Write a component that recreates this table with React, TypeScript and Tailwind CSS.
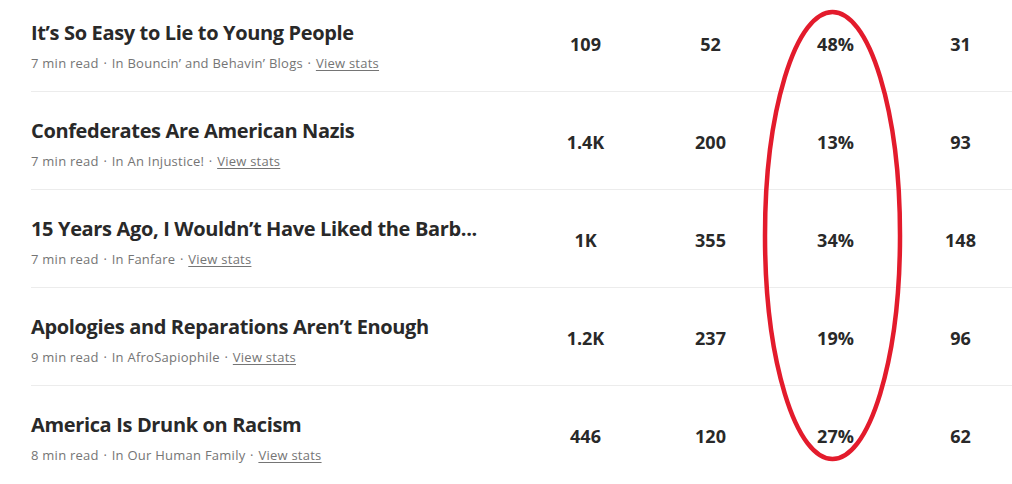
import React from "react";

const rows = [
  { title: "It’s So Easy to Lie to Young People", min: "7", pub: "Bouncin’ and Behavin’ Blogs", v: ["109", "52", "48%", "31"] },
  { title: "Confederates Are American Nazis", min: "7", pub: "An Injustice!", v: ["1.4K", "200", "13%", "93"] },
  { title: "15 Years Ago, I Wouldn’t Have Liked the Barb...", min: "7", pub: "Fanfare", v: ["1K", "355", "34%", "148"] },
  { title: "Apologies and Reparations Aren’t Enough", min: "9", pub: "AfroSapiophile", v: ["1.2K", "237", "19%", "96"] },
  { title: "America Is Drunk on Racism", min: "8", pub: "Our Human Family", v: ["446", "120", "27%", "62"] },
];

export default function App() {
  return (
    <div
      className="relative w-[1012px] h-[484px] overflow-hidden bg-white"
      style={{ fontFamily: '"Open Sans", "Noto Sans", sans-serif' }}
    >
      <div className="ml-[31px] w-[992px] mt-[-6px]">
        {rows.map((r, i) => (
          <div
            key={i}
            className={`flex h-[98px] ${i < rows.length - 1 ? "border-b border-[#ececec]" : ""}`}
          >
            <div className="flex-1 min-w-0 pt-[25px]">
              <div className="text-[20px] leading-[28px] font-bold text-[#292929] tracking-[-0.35px] whitespace-nowrap">
                {r.title}
              </div>
              <div className="mt-[6px] text-[13px] leading-[20px] text-[#757575] tracking-[0.25px] whitespace-nowrap">
                {r.min} min read <span className="mx-[1px]">·</span> In {r.pub}{" "}
                <span className="mx-[1px]">·</span> <span className="underline underline-offset-2">View stats</span>
              </div>
            </div>
            {r.v.map((n, j) => (
              <div
                key={j}
                className="w-[125px] flex items-center justify-center pt-[3px] text-[18px] font-bold text-[#292929]"
              >
                {n}
              </div>
            ))}
          </div>
        ))}
      </div>
      <svg className="absolute left-0 top-0 pointer-events-none" width="1012" height="484">
        <ellipse cx="832.5" cy="235.5" rx="67.5" ry="223.5" fill="none" stroke="#e31b2c" strokeWidth="4.5" />
      </svg>
    </div>
  );
}
